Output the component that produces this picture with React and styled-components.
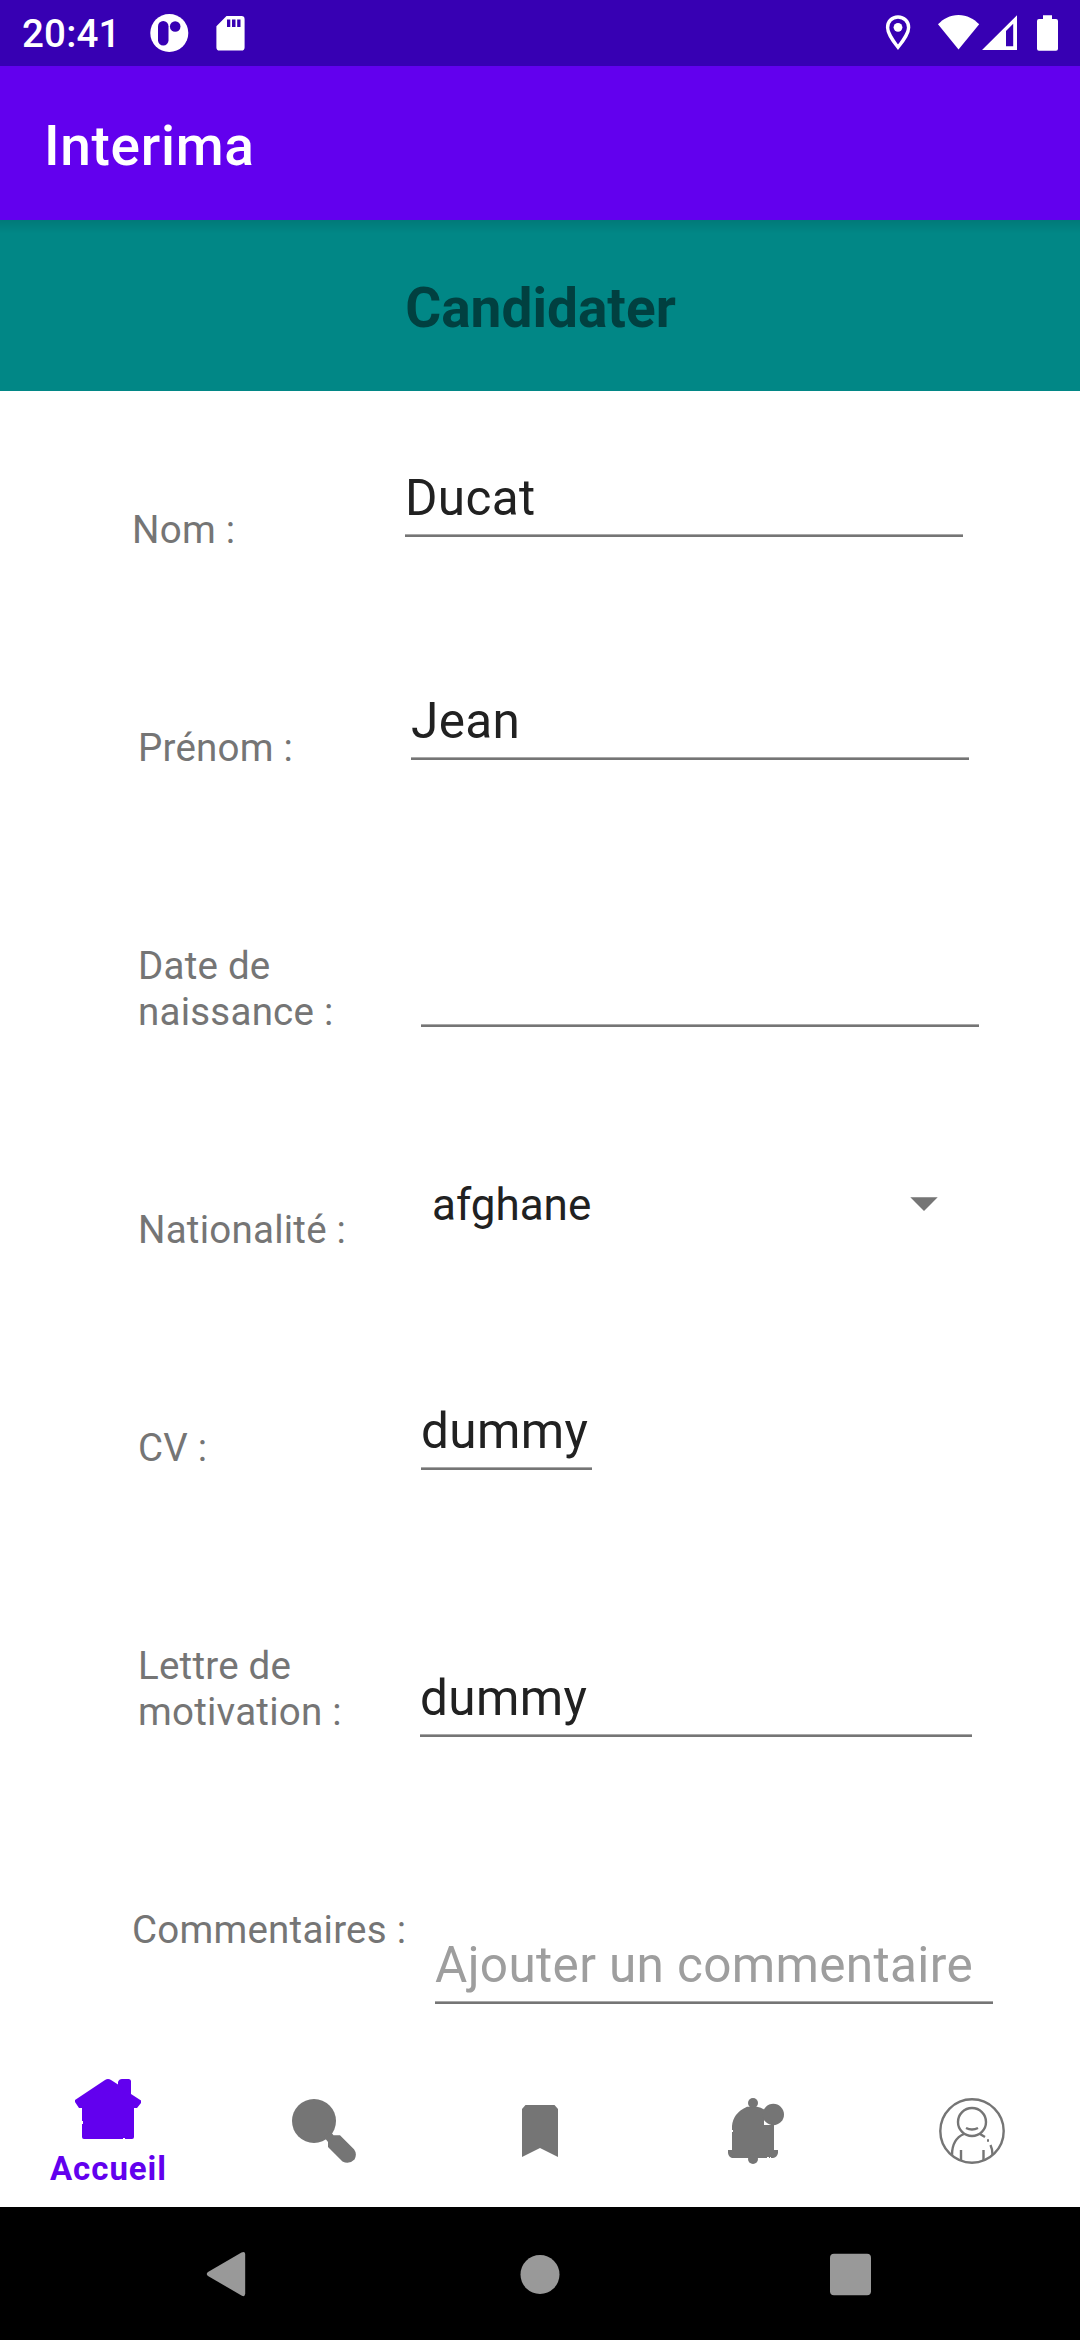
import React from "react";
import styled, { createGlobalStyle } from "styled-components";

const GlobalStyle = createGlobalStyle`
  *, *::before, *::after { box-sizing: border-box; }
  body { margin: 0; background: #fff; font-family: Roboto, "Liberation Sans", sans-serif; }
`;

const Screen = styled.div`
  width: 1080px;
  height: 2340px;
  display: flex;
  flex-direction: column;
  overflow: hidden;
  background: #fff;
`;

const StatusBar = styled.header`
  height: 66px;
  flex: none;
  display: flex;
  justify-content: space-between;
  padding: 0 22px 0 22px;
  background: #3700b3;
  color: #fff;
`;

const StatusGroup = styled.div`
  display: flex;
  align-items: center;
`;

const Clock = styled.time`
  width: 128px;
  font-size: 38.5px;
  font-weight: 500;
  line-height: 46px;
  letter-spacing: 0.2px;
  padding-top: 2px;
`;

const StatusIcon = styled.svg`
  display: block;
  flex: none;
  height: 66px;
  width: ${(p) => p.$width}px;
  margin-left: ${(p) => p.$gap || 0}px;
`;

const AppBar = styled.div`
  height: 154px;
  flex: none;
  display: flex;
  align-items: center;
  padding: 6px 44px 0;
  background: #6200ee;
  color: #fff;
`;

const AppTitle = styled.h1`
  margin: 0;
  font-size: 55px;
  font-weight: 500;
  line-height: 64px;
  letter-spacing: 0.7px;
`;

const Banner = styled.div`
  height: 171px;
  flex: none;
  display: flex;
  align-items: center;
  justify-content: center;
  padding: 5px 0 0 1px;
  background: linear-gradient(rgba(0, 0, 0, 0.1), rgba(0, 0, 0, 0) 14px), #018786;
`;

const BannerTitle = styled.h2`
  margin: 0;
  font-size: 55px;
  font-weight: 700;
  line-height: 64px;
  color: #014040;
`;

const Form = styled.main`
  flex: 1;
  min-height: 0;
  overflow: hidden;
  padding-top: 66px;
`;

const Row = styled.div`
  display: flex;
  align-items: flex-start;
  height: ${(p) => (p.$tall ? 264 : 218)}px;
  padding-left: ${(p) => p.$inset}px;
`;

const Label = styled.label`
  flex: none;
  width: ${(p) => p.$width}px;
  padding-top: 50px;
  font-size: 38.5px;
  line-height: 46px;
  letter-spacing: 0.23px;
  color: #757575;
  white-space: pre-line;
`;

const Field = styled.div`
  flex: none;
  width: ${(p) => p.$width}px;
  height: 69px;
  margin-top: ${(p) => p.$drop}px;
  font-size: 49.5px;
  line-height: 60px;
  letter-spacing: 0.35px;
  white-space: nowrap;
  color: ${(p) => (p.$hint ? "#9e9e9e" : "#212121")};
  background: linear-gradient(#a8a8a8 1px, #757575 1px) bottom / 100% 3px no-repeat;
`;

const Select = styled.div`
  flex: none;
  display: flex;
  align-items: center;
  justify-content: space-between;
  width: 506px;
  height: 52px;
  margin-top: ${(p) => p.$drop}px;
  font-size: 44px;
  line-height: 52px;
  color: #212121;
`;

const Arrow = styled.svg`
  display: block;
  width: 28px;
  height: 14px;
  margin-bottom: 2px;
`;

const Tabs = styled.nav`
  flex: none;
  height: 154px;
  display: grid;
  grid-template-columns: repeat(5, 1fr);
  background: #fff;
`;

const Tab = styled.div`
  display: flex;
  flex-direction: column;
  align-items: center;
  padding-top: ${(p) => (p.$active ? 23 : 45)}px;
  color: ${(p) => (p.$active ? "#6200ee" : "#757575")};
`;

const TabIcon = styled.svg`
  display: block;
  flex: none;
  width: 66px;
  height: 66px;
`;

const TabText = styled.span`
  margin: 7px 0 0 1px;
  font-size: 33px;
  font-weight: 700;
  line-height: 40px;
  letter-spacing: 0.95px;
`;

const SystemNav = styled.footer`
  flex: none;
  height: 133px;
  display: flex;
  align-items: center;
  justify-content: space-between;
  padding: 0 209px 0 206px;
  background: #000;
`;

const SystemIcon = styled.svg`
  display: block;
  width: ${(p) => p.$size}px;
  height: 48px;
  fill: #999;
`;

const fields = [
  { label: "Nom :", value: "Ducat", inset: 132, left: 405, width: 558, drop: 11 },
  { label: "Prénom :", value: "Jean", inset: 138, left: 411, width: 558, drop: 16 },
  { label: "Date de\nnaissance :", value: "", inset: 138, left: 421, width: 558, drop: 65, tall: true },
  { label: "Nationalité :", value: "afghane", inset: 138, left: 432, drop: 22, select: true },
  { label: "CV :", value: "dummy", inset: 138, left: 421, width: 171, drop: 26 },
  { label: "Lettre de\nmotivation :", value: "dummy", inset: 138, left: 420, width: 552, drop: 75, tall: true },
  { label: "Commentaires :", value: "Ajouter un commentaire", inset: 132, left: 435, width: 558, drop: 78, hint: true },
];

function FormRow({ label, value, inset, left, width, drop, tall, select, hint }) {
  return (
    <Row $inset={inset} $tall={tall}>
      <Label $width={left - inset}>{label}</Label>
      {select ? (
        <Select $drop={drop}>
          {value}
          <Arrow viewBox="0 0 28 14">
            <path d="M0.3 0.3H27.7L14 14Z" fill="#757575" />
          </Arrow>
        </Select>
      ) : (
        <Field $width={width} $drop={drop} $hint={hint}>
          {value}
        </Field>
      )}
    </Row>
  );
}

export default function App() {
  return (
    <>
      <GlobalStyle />
      <Screen>
        <StatusBar>
          <StatusGroup>
            <Clock>20:41</Clock>
            <StatusIcon $width={39} viewBox="150 0 39 66">
              <circle cx="169.3" cy="33" r="19" fill="#fff" />
              <rect x="158" y="21" width="10.5" height="24.5" rx="5.2" fill="#3700b3" />
              <circle cx="175.2" cy="26.5" r="5.3" fill="#3700b3" />
            </StatusIcon>
            <StatusIcon $width={29} $gap={27} viewBox="216 0 29 66">
              <path
                fill="#fff"
                fillRule="evenodd"
                d="M226.5 16H241.5Q244.6 16 244.6 19.2V47.4Q244.6 50.5 241.5 50.5H219.5Q216.4 50.5 216.4 47.4V26.3ZM227 19.5V27H230.3V19.5ZM232 19.5V27H235.5V19.5ZM237.2 19.5V27H240.5V19.5Z"
              />
            </StatusIcon>
          </StatusGroup>
          <StatusGroup>
            <StatusIcon $width={26} viewBox="885 0 26 66">
              <path
                d="M898 17C891.8 17 887.6 21.6 887.6 27.4C887.6 34.4 898 47.2 898 47.2C898 47.2 908.6 34.4 908.6 27.4C908.6 21.6 904.2 17 898 17Z"
                fill="none"
                stroke="#fff"
                strokeWidth="3.4"
              />
              <circle cx="898" cy="27.3" r="4.4" fill="#fff" />
            </StatusIcon>
            <StatusIcon $width={42} $gap={27} viewBox="938 0 42 66">
              <path d="M938 24.3C943 19 950 15 958.5 15C967 15 974 19 979.2 24.3L958.5 49.5Z" fill="#fff" />
            </StatusIcon>
            <StatusIcon $width={35} $gap={2} viewBox="982 0 35 66">
              <path d="M982 50L1017 15.3V50ZM1006 31V46.3H1013.2V23.8Z" fill="#fff" fillRule="evenodd" />
            </StatusIcon>
            <StatusIcon $width={21} $gap={20} viewBox="1037 0 21 66">
              <path
                d="M1043 15.3H1052V19H1056Q1058 19 1058 21V48.8Q1058 50.8 1056 50.8H1039Q1037 50.8 1037 48.8V21Q1037 19 1039 19H1043Z"
                fill="#fff"
              />
            </StatusIcon>
          </StatusGroup>
        </StatusBar>

        <AppBar>
          <AppTitle>Interima</AppTitle>
        </AppBar>

        <Banner>
          <BannerTitle>Candidater</BannerTitle>
        </Banner>

        <Form>
          {fields.map((field) => (
            <FormRow key={field.label} {...field} />
          ))}
        </Form>

        <Tabs>
          <Tab $active>
            <TabIcon viewBox="0 0 66 66" fill="currentColor">
              <path d="M0 26V24L30 4Q33 2 36 4L43 8.5V6Q44 3 47 3H53.5Q56 3 56 5.5V18L66 24.5V27L62 32H59V61Q59 63 57 63H50V62H48V63H9Q7 63 7 61V48H8V45H7V32H4Z" />
            </TabIcon>
            <TabText>Accueil</TabText>
          </Tab>
          <Tab>
            <TabIcon viewBox="0 0 66 66" fill="currentColor">
              <circle cx="23" cy="23" r="22" />
              <path d="M33 39L39 33L42.500 37.300H49L63 51.300Q66.500 56 63.500 61.500Q58 67 51.500 63.500L37 49V44Z" />
            </TabIcon>
          </Tab>
          <Tab>
            <TabIcon viewBox="0 0 66 66" fill="currentColor">
              <path d="M15 11L18.500 7H47.500L51 11V59L33 50L15 59Z" />
            </TabIcon>
          </Tab>
          <Tab>
            <TabIcon viewBox="0 0 66 66" fill="currentColor">
              <path d="M9 28Q10 15 24 8.700H34Q38 9.500 41 11.500V27H51V52H55V55Q54 59.500 50 60H48V59H47V60H46V59H44V60H9Q5.500 59 5 55V52H9V34H10V32H9Z" />
              <circle cx="30" cy="5" r="5" />
              <circle cx="50.300" cy="16.500" r="10.700" />
              <circle cx="30" cy="61" r="5" />
            </TabIcon>
          </Tab>
          <Tab>
            <TabIcon viewBox="0 0 66 66" fill="none" stroke="currentColor" strokeWidth="2.4">
              <circle cx="33" cy="33" r="31.700" />
              <circle cx="33" cy="24" r="14" />
              <path d="M27 30Q33 33 39 30M25 36Q13 41 13 57M41 36L46 39M48 42.500H50M51.500 47Q53.500 51 53.500 57M22 52V63M44.500 52V63" />
            </TabIcon>
          </Tab>
        </Tabs>

        <SystemNav>
          <SystemIcon $size={40} viewBox="0 0 40 48">
            <path d="M2 22L35.500 2.500Q39 1 39.200 4V43.500Q39 47.500 35.500 45.500L2 26Q-0.500 24 2 22Z" />
          </SystemIcon>
          <SystemIcon $size={44} viewBox="-4 0 44 48">
            <circle cx="20" cy="24.500" r="19.500" />
          </SystemIcon>
          <SystemIcon $size={41} viewBox="0 0 41 48">
            <rect x="0" y="3.800" width="41" height="41.500" rx="4" />
          </SystemIcon>
        </SystemNav>
      </Screen>
    </>
  );
}
